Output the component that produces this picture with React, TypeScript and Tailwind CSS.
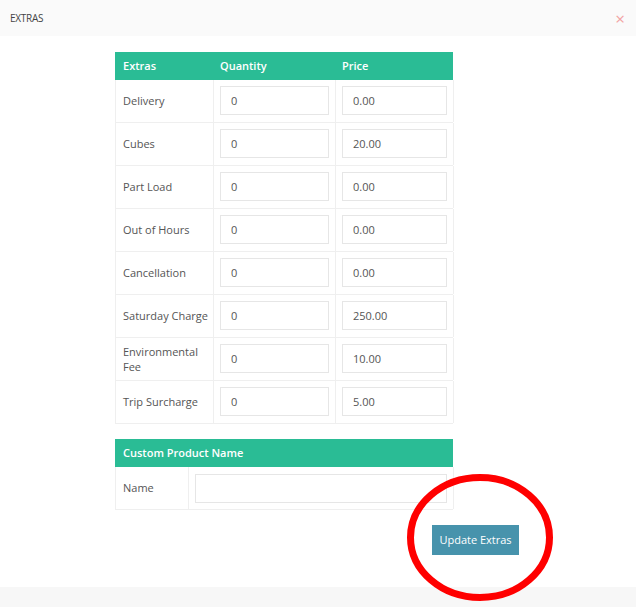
import React from "react";

const extras = [
  { name: "Delivery", qty: "0", price: "0.00" },
  { name: "Cubes", qty: "0", price: "20.00" },
  { name: "Part Load", qty: "0", price: "0.00" },
  { name: "Out of Hours", qty: "0", price: "0.00" },
  { name: "Cancellation", qty: "0", price: "0.00" },
  { name: "Saturday Charge", qty: "0", price: "250.00" },
  { name: "Environmental Fee", qty: "0", price: "10.00" },
  { name: "Trip Surcharge", qty: "0", price: "5.00" },
];

function Field({ value, className = "" }: { value: string; className?: string }) {
  return (
    <input
      readOnly
      value={value}
      className={`h-[29px] border border-[#e6e6e6] bg-white pl-[10px] text-[11px] text-[#555] outline-none ${className}`}
    />
  );
}

export default function App() {
  return (
    <div className="relative h-[607px] w-[636px] overflow-hidden bg-white text-[11px] text-[#555]" style={{ fontFamily: '"Open Sans", sans-serif' }}>
      <div className="flex h-[36px] items-center justify-between bg-[#fafafa] pl-[10px] pr-[11px]">
        <span className="text-[10px] tracking-tight text-[#444]">EXTRAS</span>
        <span className="text-[17px] leading-none text-[#f2a3a3]">×</span>
      </div>

      <div className="h-[551px] pt-[16px]">
        <div className="ml-[115px] w-[338px]">
          <div className="grid h-[28px] grid-cols-[98px_122px_118px] items-center bg-[#2abc95] font-semibold text-white">
            <span className="pl-[8px]">Extras</span>
            <span className="pl-[7px]">Quantity</span>
            <span className="pl-[7px]">Price</span>
          </div>
          {extras.map((row) => (
            <div key={row.name} className="grid h-[43px] grid-cols-[98px_122px_118px] border-b border-l border-[#efefef]">
              <div className="flex items-center border-r border-[#efefef] pl-[7px] pr-[4px] pb-[1px] leading-[15px]">{row.name}</div>
              <div className="flex items-center border-r border-[#efefef] px-[6px] pb-[1px]">
                <Field value={row.qty} className="w-[109px]" />
              </div>
              <div className="flex items-center border-r border-[#efefef] px-[6px] pb-[1px]">
                <Field value={row.price} className="w-[105px]" />
              </div>
            </div>
          ))}

          <div className="mt-[15px] flex h-[28px] items-center bg-[#2abc95] pl-[8px] font-semibold text-white">Custom Product Name</div>
          <div className="grid h-[43px] grid-cols-[73px_265px] border-b border-l border-[#efefef]">
            <div className="flex items-center border-r border-[#efefef] pl-[7px]">Name</div>
            <div className="flex items-center border-r border-[#efefef] pl-[6px]">
              <Field value="" className="w-[252px]" />
            </div>
          </div>
        </div>

        <button className="ml-[432px] mt-[15px] h-[30px] w-[87px] bg-[#4793ac] text-[11px] text-white">Update Extras</button>
      </div>

      <div className="h-[20px] bg-[#f7f7f7]" />

      <svg className="pointer-events-none absolute left-0 top-0" width="636" height="607">
        <ellipse cx="480" cy="537.5" rx="69.5" ry="60" fill="none" stroke="#ff0000" strokeWidth="7" />
      </svg>
    </div>
  );
}
